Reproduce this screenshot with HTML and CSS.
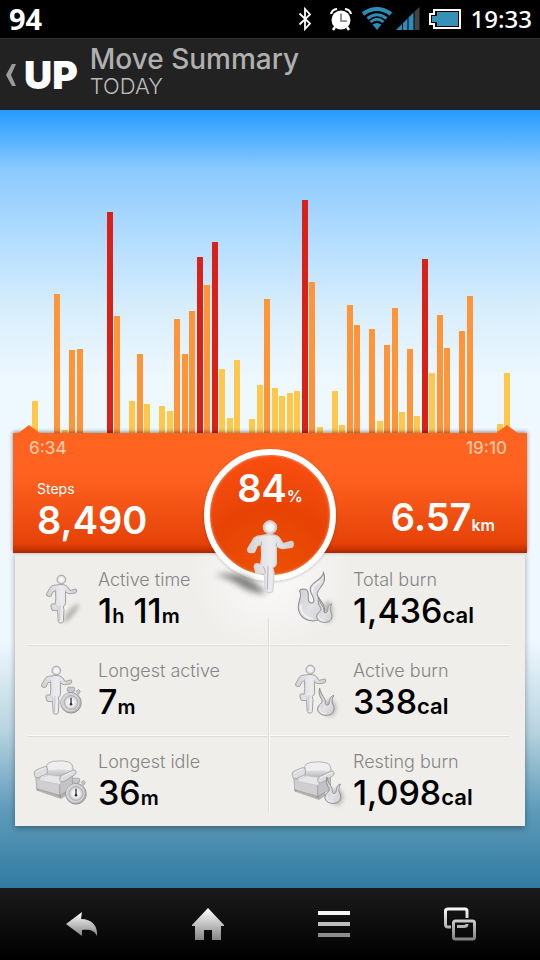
FILE: index.html
```html
<!DOCTYPE html>
<html lang="en">
<head>
<meta charset="utf-8">
<meta name="viewport" content="width=device-width, initial-scale=1">
<title>Move Summary</title>
<link rel="stylesheet" href="styles.css">
</head>
<body>
<svg class="defs" width="0" height="0" aria-hidden="true">
  <defs>
    <linearGradient id="body" x1="0" y1="0" x2="1" y2="0"><stop offset="0" stop-color="#d2d2d5"/><stop offset=".5" stop-color="#ececee"/><stop offset="1" stop-color="#cfcfd2"/></linearGradient>
    <radialGradient id="ball"><stop offset="0" stop-color="#fff"/><stop offset=".6" stop-color="#ececee"/><stop offset="1" stop-color="#bdbdc0"/></radialGradient>
    <linearGradient id="fire" x1="0" y1="0" x2="1" y2="1"><stop offset="0" stop-color="#c8c8cc"/><stop offset=".6" stop-color="#e2e2e5"/><stop offset="1" stop-color="#ccccd0"/></linearGradient>
    <linearGradient id="back" x1="0" y1="0" x2="0" y2="1"><stop offset="0" stop-color="#f2f2f3"/><stop offset=".5" stop-color="#e2e2e4"/><stop offset="1" stop-color="#b4b4b7"/></linearGradient>
    <linearGradient id="metal" x1="0" y1="0" x2="0" y2="1"><stop offset="0" stop-color="#fff"/><stop offset="1" stop-color="#858585"/></linearGradient>
    <linearGradient id="metalbox" gradientUnits="userSpaceOnUse" x1="0" y1="0" x2="0" y2="32"><stop offset="0" stop-color="#fff"/><stop offset="1" stop-color="#858585"/></linearGradient>
    <filter id="soft" x="-50%" y="-50%" width="200%" height="200%"><feGaussianBlur stdDeviation="2"/></filter>
    <filter id="softer" x="-50%" y="-100%" width="200%" height="300%"><feGaussianBlur stdDeviation="3"/></filter>
    <symbol id="runner" viewBox="0 0 144 225" overflow="visible">
      <path d="M44 50C28 50 20 56 16 66L3 88Q0 101 12 101L22 100L31 80L43 76L44 110Q43 122 41 136L28 134Q21 137 22 144L27 162Q30 166 40 164L52 164L55 214Q57 222 68 221Q77 221 78 213L81 160L77 146Q90 140 88 128L88 80Q96 88 106 89L133 85Q140 84 138 70Q134 65 128 69L108 74L98 58Q92 50 78 48Q60 46 44 50Z" fill="url(#body)" stroke="currentColor" stroke-width="4" stroke-linejoin="round"/>
      <path d="M48 142Q54 148 55 163M63 140L61 212M88 72V82M43 68V78" fill="none" stroke="#b4b4b8" stroke-width="3"/>
      <circle cx="69" cy="25" r="20" fill="url(#ball)" stroke="currentColor" stroke-width="3"/>
    </symbol>
    <symbol id="flame" viewBox="0 0 54 84" overflow="visible">
      <path d="M8 0C4 16 8 24 14 34C18 42 12 46 6 52C-4 64 4 82 27 82C48 82 56 66 48 50C44 42 44 34 50 22C38 26 38 36 37 44C36 54 24 54 25 44C27 30 12 24 8 0Z" fill="url(#fire)" stroke="#8d8d90" stroke-width="3"/>
      <path d="M9 58C5 70 16 78 28 77" fill="none" stroke="#f4f4f5" stroke-width="3"/>
    </symbol>
    <symbol id="watch" viewBox="0 0 66 80" overflow="visible">
      <path d="M22 4Q22 0 27 0H39Q44 0 44 4V12H39V22H27V12H22ZM49 12L56 7L61 13L55 22Z" fill="#c9c9cb" stroke="#929295" stroke-width="2"/>
      <circle cx="33" cy="47" r="31" fill="#b3b3b6" stroke="#858588" stroke-width="2"/>
      <circle cx="31" cy="45" r="28" fill="#d5d5d7"/>
      <circle cx="33" cy="46" r="21" fill="url(#ball)" stroke="#a5a5a8" stroke-width="2"/>
      <path d="M33 32V50" stroke="#333" stroke-width="4"/><circle cx="33" cy="51" r="4" fill="#333"/>
    </symbol>
    <symbol id="sofa" viewBox="0 0 132 115" overflow="visible">
      <path d="M10 92L84 118L108 102L60 80Z" fill="#777" opacity=".5"/>
      <path d="M9 84H17V92H11ZM76 104H84V112H78ZM96 92H103V98H98Z" fill="#98989b"/>
      <path d="M40 40L41 16Q43 7 60 4Q90 0 108 6Q121 10 121 34L110 52H45Z" fill="url(#back)" stroke="#97979a" stroke-width="2"/>
      <path d="M45 20Q48 11 64 9Q92 5 108 11Q116 16 115 32Q82 25 45 31Z" fill="#eeeeef"/>
      <path d="M80 62L119 44V86L80 107Z" fill="#c3c3c6" stroke="#98989b" stroke-width="2"/>
      <path d="M8 52L80 68V107L11 87Z" fill="#cfcfd2" stroke="#98989b" stroke-width="2"/>
      <path d="M20 56L45 45L88 50L82 74L20 62Z" fill="#e6e6e8" stroke="#a9a9ac" stroke-width="1"/>
      <path d="M3 40Q2 32 12 29L34 20Q43 19 43 27V38Q40 44 24 49L15 54Q3 55 3 40Z" fill="#dddde0" stroke="#929295" stroke-width="2"/>
      <path d="M80 57Q80 48 90 45L120 31Q130 28 130 38Q131 44 119 49L93 65Q81 69 80 57Z" fill="#dcdcdf" stroke="#929295" stroke-width="2"/>
      <path d="M9 37Q18 29 37 24M87 52Q100 44 122 35" fill="none" stroke="#f0f0f1" stroke-width="3"/>
    </symbol>
  </defs>
</svg>

<div class="status">
  <span class="status-count">94</span>
  <div class="status-icons">
    <svg class="bt" width="14" height="24" viewBox="0 0 14 24"><path d="M1.500 6.500L12 16.500L7 22V2L12 7.500L1.500 17.500" fill="none" stroke="#fff" stroke-width="1.800"/></svg>
    <svg class="alarm" width="22" height="24" viewBox="0 0 22 24"><circle cx="11" cy="13" r="9.500" fill="#fff"/><path d="M1 7Q2 2.500 7 2M15 2Q20 2.500 21 7" fill="none" stroke="#fff" stroke-width="2.200"/><path d="M5 20L3 23M17 20L19 23" stroke="#fff" stroke-width="2.500"/><path d="M11 6.500V14H17" fill="none" stroke="#777" stroke-width="1.600"/></svg>
    <svg class="wifi" width="30" height="24" viewBox="0 0 30 24" fill="none" stroke="#2b8db8"><path d="M1 7Q15-3 29 7" stroke-width="4"/><path d="M5.500 11.500Q15 4 24.500 11.500" stroke-width="3"/><path d="M8.500 15Q15 9.500 21.500 15" stroke-width="2.800"/><path d="M10.500 17.500Q15 14.500 19.500 17.500L15 23Z" fill="#2b8db8" stroke="none"/></svg>
    <svg class="signal" width="24" height="24" viewBox="0 0 24 24"><path d="M0 23L6 17V23ZM7 16L11.500 11.500V23H7ZM12.500 10.500L17.500 5.500V23H12.500Z" fill="#2b8db8"/><path d="M18.500 4.500L23.500 0V23H18.500Z" fill="#444"/></svg>
    <svg class="battery" width="32" height="22" viewBox="0 0 32 22"><path d="M5 2H31V20H5V16H1V6H5Z" fill="#000" stroke="#fff" stroke-width="2"/><path d="M8 4H29V18H8V14H3V8H8Z" fill="#3791b7"/></svg>
    <time class="clock">19:33</time>
  </div>
</div>

<header class="topbar">
  <a class="back" href="#" aria-label="Back to UP">
    <svg width="11" height="22" viewBox="0 0 11 22"><path d="M10 0L5 11L10 22H6L0 11L6 0Z" fill="#9b9b9b"/></svg>
    <span>UP</span>
  </a>
  <div class="titles">
    <h1>Move Summary</h1>
    <p>TODAY</p>
  </div>
</header>

<main class="sky">
  <div class="chart" id="chart" role="img" aria-label="Activity through the day"></div>

  <section class="goal">
    <div class="times"><time class="mark">6:34</time><time class="mark">19:10</time></div>
    <div class="totals">
      <div><p class="caption">Steps</p><p class="big">8,490</p></div>
      <p class="big distance">6.57<small>km</small></p>
    </div>
    <div class="ring"><p class="big">84<small>%</small></p></div>
    <svg class="hero" width="76" height="78" viewBox="0 0 76 78">
      <path d="M-4 56Q20 52 34 62L48 74Q34 76 20 66Q8 58 -4 56Z" fill="#333" opacity=".6" filter="url(#softer)"/>
      <use href="#runner" x="28" y="0" width="48" height="75" color="#d5d5d8"/>
    </svg>
  </section>

  <section class="card">
    <div class="cell">
      <svg class="icon" viewBox="0 0 60 60"><ellipse cx="38" cy="43" rx="12" ry="3" transform="rotate(-50 38 43)" fill="#777" opacity=".5" filter="url(#soft)"/><use href="#runner" x="13" y="4" width="32" height="50"/></svg>
      <div><h2>Active time</h2><p class="value">1<small>h</small> 11<small>m</small></p></div>
    </div>
    <div class="cell">
      <svg class="icon" viewBox="0 0 60 60"><ellipse cx="40" cy="42" rx="5" ry="11" fill="#666" opacity=".4" filter="url(#soft)"/><g transform="translate(10 2) scale(.34)"><path d="M75 2C72 22 48 26 38 42C28 58 48 70 47 84C46 94 34 94 31 84C28 74 36 56 22 51C14 49 8 50 4 56C12 64 6 76 2 92C-4 120 14 144 44 144C72 144 84 122 76 100C72 84 56 78 56 64C58 46 88 36 75 2Z" fill="url(#fire)" stroke="#8d8d90" stroke-width="3"/><path d="M9 96C5 116 20 136 44 137M66 27C50 36 38 45 44 60" fill="none" stroke="#f2f2f4" stroke-width="5"/></g><use href="#flame" x="28" y="27" width="17" height="26"/></svg>
      <div><h2>Total burn</h2><p class="value">1,436<small class="cal">cal</small></p></div>
    </div>
    <div class="cell">
      <svg class="icon" viewBox="0 0 60 60"><use href="#runner" x="8" y="4" width="32" height="50"/><use href="#watch" x="27" y="26" width="22" height="27"/></svg>
      <div><h2>Longest active</h2><p class="value">7<small>m</small></p></div>
    </div>
    <div class="cell">
      <svg class="icon" viewBox="0 0 60 60"><use href="#runner" x="7" y="3" width="32" height="50"/><ellipse cx="42" cy="47" rx="6" ry="8" fill="#777" opacity=".5" filter="url(#soft)"/><use href="#flame" x="29" y="27" width="18" height="28"/></svg>
      <div><h2>Active burn</h2><p class="value">338<small class="cal">cal</small></p></div>
    </div>
    <div class="cell">
      <svg class="icon" viewBox="0 0 60 60"><use href="#sofa" x="0" y="8" width="44" height="38"/><use href="#watch" x="32" y="26" width="22" height="27"/></svg>
      <div><h2>Longest idle</h2><p class="value">36<small>m</small></p></div>
    </div>
    <div class="cell">
      <svg class="icon" viewBox="0 0 60 60"><use href="#sofa" x="3" y="9" width="44" height="38"/><ellipse cx="49" cy="45" rx="6" ry="8" fill="#777" opacity=".5" filter="url(#soft)"/><use href="#flame" x="36" y="25" width="18" height="27"/></svg>
      <div><h2>Resting burn</h2><p class="value">1,098<small class="cal">cal</small></p></div>
    </div>
  </section>
</main>

<nav class="softkeys">
  <button type="button" aria-label="Back"><svg width="32" height="32" viewBox="0 0 32 32"><path d="M16 4L0 16L16 28V22C24 21 28 22 31 28C32 19 27 11 15 11Z" fill="url(#metal)"/></svg></button>
  <button type="button" aria-label="Home"><svg width="32" height="34" viewBox="0 0 32 34"><path d="M16 1L0 18V19H3V33H12V23H20V33H29V19H32V18Z" fill="url(#metal)"/></svg></button>
  <button type="button" aria-label="Menu"><svg width="32" height="32" viewBox="0 0 32 32"><path d="M0 3H32V7H0Z" fill="#f5f5f5"/><path d="M0 14H32V18H0Z" fill="#bdbdbd"/><path d="M0 25H32V29H0Z" fill="#8c8c8c"/></svg></button>
  <button type="button" aria-label="Recent apps"><svg width="32" height="34" viewBox="0 0 32 34"><g fill="none" stroke="url(#metalbox)" stroke-width="3"><path d="M7 20H4Q1.500 20 1.500 17.500V4Q1.500 2 4 2H21Q23 2 23 4V11M13 19.500H20Q23 19.500 23 17"/><rect x="9.500" y="14" width="21" height="18" rx="2"/></g></svg></button>
</nav>
<script src="chart.js"></script>
</body>
</html>
```
FILE: styles.css
```css
* { box-sizing: border-box; }
body {
  margin: 0;
  min-height: 100vh;
  display: flex;
  flex-direction: column;
  background: #000;
  color: #000;
  font-family: Inter, "Liberation Sans", sans-serif;
}
h1, h2, p { margin: 0; font-weight: 400; }
svg { display: block; flex: none; overflow: visible; }
.defs { position: absolute; }

.status {
  height: 38px;
  display: flex;
  align-items: center;
  justify-content: space-between;
  padding: 0 8px 0 9px;
  color: #fff;
  font-family: "Noto Sans", sans-serif;
}
.status-count { font-size: 29px; font-weight: 700; line-height: 40px; }
.status-icons { display: flex; align-items: center; }
.bt { margin-right: 18px; }
.alarm { margin-right: 10px; }
.wifi { margin-right: 4px; }
.signal { margin-right: 9px; }
.battery { margin-right: 10px; }
.clock { font-size: 24px; font-weight: 500; line-height: 38px; }

.topbar {
  height: 72px;
  display: flex;
  align-items: flex-start;
  gap: 12px;
  padding: 0 6px;
  background: #222;
  border-top: 1px solid #303030;
}
.back {
  height: 72px;
  display: flex;
  align-items: center;
  gap: 7px;
  color: #fff;
  text-decoration: none;
  font-size: 39px;
  font-weight: 900;
  line-height: 40px;
}
.titles { padding-top: 3px; }
.titles h1 { font-size: 28px; line-height: 34px; font-weight: 500; color: #b0b0b0; }
.titles p { font-size: 22px; line-height: 20px; font-weight: 300; color: #bbb; }

.sky {
  flex: 1;
  padding: 0 13px 62px;
  background: linear-gradient(#259bff 0, #8bcaff 60px, #b3ddff 130px, #d8eefc 200px, #eef8ff 270px, #f0f8ff 530px, #b8d4e0 620px, #5e9bb9 700px, #317ba1 778px);
}
.chart {
  height: 323px;
  margin: 0 15px 0 19px;
  display: grid;
  grid-template-columns: repeat(32, 7fr 8fr);
  align-items: end;
}
.bar { width: 6px; background: #ffc84a; }
.bar.brisk { background: #ff9438; }
.bar.peak { background: #d92118; }

.goal {
  position: relative;
  z-index: 1;
  height: 120px;
  color: #fff;
  background: linear-gradient(#ff641f 0, #ff6220 35%, #e64208 92%, #c83200 97%, #a62900);
  box-shadow: 0 -1px 4px rgba(0, 0, 0, .45);
}
.times { display: flex; justify-content: space-between; padding: 5px 20px 0 16px; }
.mark {
  position: relative;
  font-size: 17px;
  line-height: 20px;
  font-weight: 500;
  color: #ffc5a5;
}
.mark::before {
  content: "";
  position: absolute;
  top: -13px;
  left: -12px;
  width: 24px;
  height: 9px;
  background: #ff641f;
  clip-path: polygon(50% 0, 100% 100%, 0 100%);
}
.mark:last-child::before { left: auto; right: -12px; }
.totals {
  display: flex;
  justify-content: space-between;
  padding: 22px 32px 0 24px;
}
.caption { font-size: 14px; line-height: 18px; }
.big { font-size: 38px; line-height: 44px; font-weight: 600; }
.big small { font-size: 16px; font-weight: 600; }
.distance { padding-top: 15px; }
.ring {
  position: absolute;
  top: 16px;
  left: 50%;
  width: 132px;
  height: 132px;
  margin-left: -66px;
  padding-top: 11px;
  border: 6px solid #fff;
  border-radius: 50%;
  background: radial-gradient(circle at 50% 100%, #ed5200, #e74305 50%, #ff5214);
  box-shadow: 0 1px 3px rgba(0, 0, 0, .2), inset 0 0 3px rgba(255, 255, 255, .5);
  text-align: center;
}
.hero { position: absolute; top: 86px; left: 50%; margin-left: -51px; }

.card {
  position: relative;
  margin: 0 2px;
  padding-top: 2px;
  display: grid;
  grid-template-columns: 1fr 1fr;
  background: radial-gradient(circle at 50% 20px, #fafafa, #f0eeeb 80px);
  box-shadow: 0 2px 6px rgba(0, 0, 0, .35);
}
.card::after {
  content: "";
  position: absolute;
  top: 65px;
  bottom: 14px;
  left: 50%;
  width: 2px;
  margin-left: -2px;
  background: linear-gradient(90deg, #dedddb 50%, #f9f9f8 50%);
}
.cell {
  height: 91px;
  display: flex;
  gap: 5px;
  padding: 15px 0 0 18px;
  background: linear-gradient(#f9f9f8 0 1px, #dedddb 1px 2px) no-repeat;
  background-size: 0 0;
}
.cell:nth-last-child(-n + 2) { height: 89px; }
.cell:nth-child(odd) { background-position: 13px 100%; }
.cell:nth-child(even) { background-position: 0 100%; }
.cell:nth-child(odd):nth-last-child(n + 3) { background-size: 100% 2px; }
.cell:nth-child(even):nth-last-child(n + 3) { background-size: calc(100% - 16px) 2px; }
.icon { width: 60px; height: 60px; color: #98989b; }
.cell h2 { font-size: 18px; line-height: 20px; font-weight: 300; color: #858585; }
.value { font-size: 34px; line-height: 42px; font-weight: 500; white-space: nowrap; }
.value small { font-size: 20px; font-weight: 600; }
.value .cal { font-size: 22px; }

.softkeys {
  height: 72px;
  display: grid;
  grid-template-columns: repeat(4, 1fr);
  padding: 0 17px 0 19px;
  background: linear-gradient(#1b1b1b, #000);
}
.softkeys button {
  display: flex;
  align-items: center;
  justify-content: center;
  padding: 0;
  border: 0;
  background: none;
}
```
FILE: chart.js
```js
// Activity level per time slot; null marks a slot without movement.
const levels = [
  32, null, null, 139, 3, 83, 84, null, null, null, 221, 117, null, 32, 79, 29,
  null, 27, 22, 114, 79, 122, 176, 148, 191, 64, 15, 73, null, 14, 48, 134,
  45, 37, 40, 42, 233, 151, 6, null, 42, 8, 128, 108, null, 104, 12, 88,
  125, 21, 84, 17, 174, 60, 118, 85, null, 102, 137, null, null, null, 9, 60
];
const scale = 323;
const chart = document.getElementById("chart");
for (const level of levels) {
  const bar = document.createElement("div");
  bar.className = "bar" + (level >= 160 ? " peak" : level >= 75 ? " brisk" : "");
  bar.style.height = (level || 0) / scale * 100 + "%";
  chart.append(bar);
}
```
